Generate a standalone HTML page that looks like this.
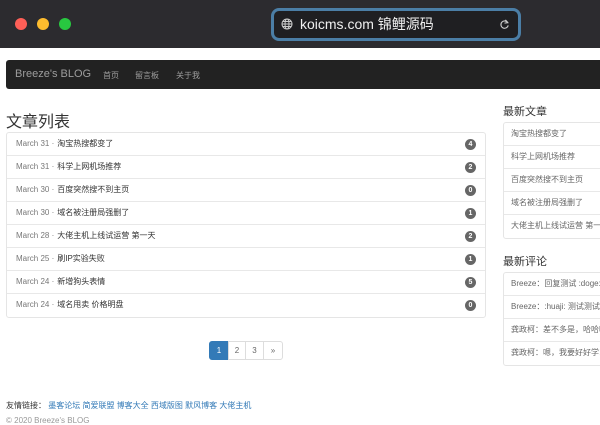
<!DOCTYPE html>
<html><head><meta charset="utf-8"><style>
*{margin:0;padding:0;box-sizing:border-box}
body{width:600px;height:420px;overflow:hidden;background:#fff;font-family:"Liberation Sans","Noto Sans CJK SC",sans-serif;position:relative}
.chrome{position:absolute;left:0;top:0;width:600px;height:48px;background:#2c2b2f}
.dot{position:absolute;top:18px;width:12px;height:12px;border-radius:50%}
.url{position:absolute;left:271px;top:8px;width:250px;height:33px;border:3px solid #4b7ea6;border-radius:8px;background:#1f1f22;color:#f0f0f0;font-size:14px;line-height:27px;padding-left:26px}
.nav{position:absolute;left:6px;top:60px;width:594px;height:29px;background:#222;border-radius:3px 0 0 3px;color:#9d9d9d;font-size:11px}
.nav span{position:absolute;top:8px}
.lg{position:absolute;border:1px solid #e5e5e5;border-radius:3px;background:#fff}
.row{height:23px;border-bottom:1px solid #e8e8e8;font-size:8px;line-height:22px;padding-left:9px;color:#333;position:relative}
.row:last-child{border-bottom:none}
.d{color:#777;margin-right:3px}
.b{position:absolute;right:9px;top:6px;width:11px;height:11px;border-radius:6px;background:#666;color:#fff;font-size:7px;line-height:11px;text-align:center;font-weight:bold}
.s .row{color:#666;padding-left:7px;white-space:nowrap;overflow:hidden}
h3{position:absolute;font-weight:normal;color:#333}
.pg{position:absolute;top:341px;height:19px;border:1px solid #ddd;font-size:8px;line-height:17px;text-align:center;color:#666}
</style></head><body>
<div class="chrome">
<div class="dot" style="left:15px;background:#fe5f57"></div>
<div class="dot" style="left:37px;background:#febc2e"></div>
<div class="dot" style="left:59px;background:#28c840"></div>
<div class="url"><svg style="position:absolute;left:7px;top:7px" width="12" height="12" viewBox="0 0 12 12" fill="none" stroke="#ccc" stroke-width="1"><circle cx="6" cy="6" r="5"/><ellipse cx="6" cy="6" rx="2" ry="5"/><path d="M1 6h10M2 3.5h8M2 8.5h8"/></svg>koicms.com 锦鲤源码<svg style="position:absolute;right:8px;top:8px" width="11" height="11" viewBox="0 0 12 12" fill="none" stroke="#ccc" stroke-width="1.2"><path d="M9.5 4A4 4 0 1 0 10 7"/><path d="M7 1l2.6 3L6 4.5"/></svg></div>
</div>
<div class="nav"><span style="left:9px;font-size:11px;top:8px">Breeze's BLOG</span><span style="left:97px;font-size:8px;top:10px">首页</span><span style="left:129px;font-size:8px;top:10px">留言板</span><span style="left:170px;font-size:8px;top:10px">关于我</span></div>
<h3 style="left:6px;top:108px;font-size:16px">文章列表</h3>
<div class="lg" style="left:6px;top:132px;width:480px">
<div class="row"><span class="d">March 31 ·</span>淘宝热搜都变了<span class="b">4</span></div>
<div class="row"><span class="d">March 31 ·</span>科学上网机场推荐<span class="b">2</span></div>
<div class="row"><span class="d">March 30 ·</span>百度突然搜不到主页<span class="b">0</span></div>
<div class="row"><span class="d">March 30 ·</span>域名被注册局强删了<span class="b">1</span></div>
<div class="row"><span class="d">March 28 ·</span>大佬主机上线试运营 第一天<span class="b">2</span></div>
<div class="row"><span class="d">March 25 ·</span>刷IP实验失败<span class="b">1</span></div>
<div class="row"><span class="d">March 24 ·</span>新增狗头表情<span class="b">5</span></div>
<div class="row"><span class="d">March 24 ·</span>域名甩卖 价格明盘<span class="b">0</span></div>
</div>
<h3 style="left:503px;top:103px;font-size:11px">最新文章</h3>
<div class="lg s" style="left:503px;top:122px;width:110px">
<div class="row">淘宝热搜都变了</div><div class="row">科学上网机场推荐</div><div class="row">百度突然搜不到主页</div><div class="row">域名被注册局强删了</div><div class="row">大佬主机上线试运营 第一天</div>
</div>
<h3 style="left:503px;top:253px;font-size:11px">最新评论</h3>
<div class="lg s" style="left:503px;top:272px;width:110px">
<div class="row">Breeze：回复测试 :doge:</div><div class="row">Breeze：:huaji: 测试测试</div><div class="row">龚政柯：差不多是，哈哈哈</div><div class="row">龚政柯：嗯，我要好好学习</div>
</div>
<div class="pg" style="left:209px;width:20px;background:#337ab7;border-color:#337ab7;color:#fff;border-radius:3px 0 0 3px">1</div>
<div class="pg" style="left:228px;width:18px">2</div>
<div class="pg" style="left:245px;width:19px">3</div>
<div class="pg" style="left:263px;width:20px;border-radius:0 3px 3px 0">»</div>
<div style="position:absolute;left:6px;top:400px;font-size:8px;color:#333">友情链接： <span style="color:#337ab7">墨客论坛 简爱联盟 博客大全 西域版图 默风博客 大佬主机</span></div>
<div style="position:absolute;left:6px;top:416px;font-size:8px;color:#999">© 2020 Breeze's BLOG</div>
</body></html>
